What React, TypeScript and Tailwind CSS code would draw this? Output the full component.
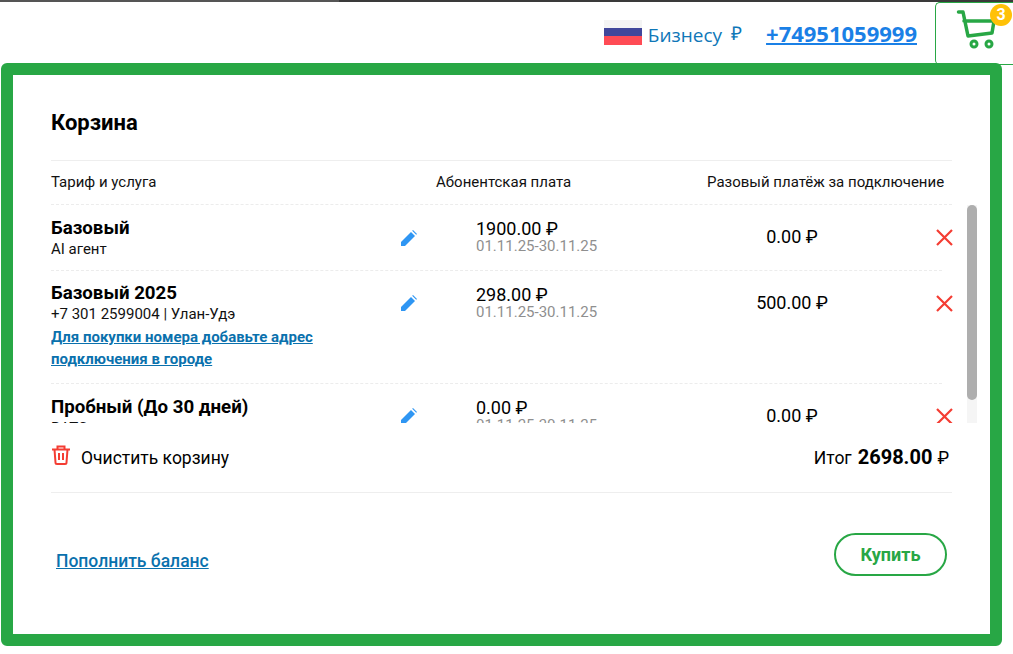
const roboto = "font-['Roboto',sans-serif]";

type Row = {
  name: string;
  sub: React.ReactNode;
  price: string;
  once: string;
  link?: boolean;
  height: string;
  first?: boolean;
  last?: boolean;
};

const rows: Row[] = [
  { name: "Базовый", sub: "AI агент", price: "1900.00", once: "0.00", height: "h-[66px]", first: true },
  {
    name: "Базовый 2025",
    sub: "+7 301 2599004 | Улан-Удэ",
    price: "298.00",
    once: "500.00",
    link: true,
    height: "h-[113px]",
  },
  { name: "Пробный (До 30 дней)", sub: "ВАТС", price: "0.00", once: "0.00", height: "h-[65px]", last: true },
];

function PencilIcon() {
  return (
    <svg width="16" height="16" viewBox="0 0 24 24" fill="#2f96f3">
      <path d="M0 24v-6L15 3l6 6L6 24z" />
      <path d="M16.8 1.2 18 0l6 6-1.2 1.2z" />
    </svg>
  );
}

function CrossIcon() {
  return (
    <svg width="17" height="17" viewBox="0 0 17 17" stroke="#f43d33" strokeWidth="2.2" fill="none">
      <path d="M1 1l15 15M16 1 1 16" />
    </svg>
  );
}

function CartRow({ row }: { row: Row }) {
  return (
    <div className={`flex ${row.height} shrink-0 ${row.last ? "" : "border-b border-dashed border-[#ececec]"}`}>
      <div className={`w-[340px] shrink-0 ${row.first ? "pt-[12px]" : row.last ? "pt-[12px]" : "pt-[11px]"}`}>
        <div className="text-[18.7px] leading-[22px] font-bold text-black">{row.name}</div>
        <div className="text-[15px] leading-[20px] text-[#111]">{row.sub}</div>
        {row.link && (
          <div className="mt-[2px] text-[15px] leading-[22px] font-bold text-[#0a71ad] underline">
            Для покупки номера добавьте адрес
            <br />
            подключения в городе
          </div>
        )}
      </div>
      <div className={`w-[85px] shrink-0 pl-[10px] ${row.first ? "pt-[25px]" : "pt-[24px]"}`}>
        <PencilIcon />
      </div>
      <div className="w-[221px] shrink-0 pt-[14px]">
        <div className="text-[18px] leading-[19px] text-black">{row.price} ₽</div>
        <div className="text-[15px] leading-[16px] text-[#8f8f8f]">01.11.25-30.11.25</div>
      </div>
      <div className="w-[190px] shrink-0 pt-[21px] text-center text-[18px] leading-[21px] text-black">
        {row.once} ₽
      </div>
      <div className="-mr-[11px] w-[66px] shrink-0 pt-[24px] pl-[49px]">
        <CrossIcon />
      </div>
    </div>
  );
}

export default function App() {
  return (
    <div className={`h-[654px] w-[1013px] overflow-hidden bg-white ${roboto}`}>
      <div className="flex h-[2px] bg-[#3a3a3a]">
        <div className="w-[339px] bg-[#555555]" />
      </div>
      <header className="relative flex h-[61px] items-center justify-end pr-[96px]">
        <div className="flex h-[25px] w-[38px] flex-col">
          <div className="h-[8px] bg-[#f4f4f4]" />
          <div className="h-[8px] bg-[#41479b]" />
          <div className="h-[9px] bg-[#ff4b55]" />
        </div>
        <span className="mt-[6px] ml-[6px] font-['Open_Sans',sans-serif] text-[19px] text-[#0f77b8]">Бизнесу</span>
        <span className="mt-[2px] ml-[9px] font-['Open_Sans',sans-serif] text-[19px] text-[#0f77b8]">₽</span>
        <a className="ml-[24px] font-['Open_Sans',sans-serif] text-[22px] leading-[28px] font-bold text-[#1a80e6] underline decoration-2">
          +74951059999
        </a>
        <div className="absolute top-0 right-0 z-10 h-[63px] w-[78px] rounded-l-[5px] border border-r-0 border-[#28a745] bg-white">
          <svg className="absolute top-[6px] left-[20px]" width="42" height="42" viewBox="0 0 42 42" fill="none">
            <path
              d="M2.500 3H7l5 24 24-3 2-12H8"
              stroke="#28a745"
              strokeWidth="3.500"
              strokeLinecap="round"
              strokeLinejoin="round"
            />
            <circle cx="18" cy="35" r="3" stroke="#28a745" strokeWidth="3" />
            <circle cx="33" cy="35" r="3" stroke="#28a745" strokeWidth="3" />
          </svg>
          <div className="absolute top-[1px] right-[1px] flex h-[22px] w-[22px] items-center justify-center rounded-full bg-[#ffc107] text-[16px] font-bold text-white">
            3
          </div>
        </div>
      </header>
      <main className="relative z-20 ml-[1px] h-[583px] w-[1001px] rounded-[6px] border-[12px] border-[#28a745] bg-white pt-[24px] pl-[38px]">
        <h1 className="h-[61px] text-[22px] leading-[48px] font-bold text-black">Корзина</h1>
        <div className="flex h-[44px] w-[901px] border-t border-[#eeeeee] text-[15px] leading-[42px] text-[#111]">
          <div className="w-[385px]">Тариф и услуга</div>
          <div className="w-[271px]">Абонентская плата</div>
          <div>Разовый платёж за подключение</div>
        </div>
        <div className="w-[901px] border-t border-dashed border-[#ececec]" />
        <div className="flex h-[218px] w-[926px] overflow-hidden">
          <div className="flex w-[891px] shrink-0 flex-col">
            {rows.map((row) => (
              <CartRow key={row.name} row={row} />
            ))}
          </div>
          <div className="ml-[25px] h-full w-[10px] shrink-0 bg-[#f5f5f5]">
            <div className="h-[195px] rounded-[5px] bg-[#aeaeae]" />
          </div>
        </div>
        <div className="flex h-[70px] w-[901px] items-center justify-between border-b border-[#eeeeee] pb-[1px]">
          <div className="flex items-center">
            <svg className="-mt-[4px]" width="20" height="20" viewBox="0 0 20 20" fill="none" stroke="#f43d33" strokeWidth="2">
              <path d="M1 4.500h18M6.500 4.500V1.500h7v3M3.500 4.500l1 13q0 1.500 1.500 1.500h8q1.500 0 1.500-1.500l1-13M8 8v7M12 8v7" />
            </svg>
            <span className="mt-[2px] ml-[10px] text-[17.500px] text-black">Очистить корзину</span>
          </div>
          <div className="mr-[3px] flex items-baseline text-[17.500px] text-black">
            <span>Итог</span>
            <span className="ml-[6px] text-[20px] font-bold">2698.00</span>
            <span className="ml-[5px]">₽</span>
          </div>
        </div>
        <div className="flex w-[901px] items-center justify-between pt-[40px] pr-[5px] pl-[5px]">
          <a className="mt-[14px] text-[17.500px] font-medium text-[#0a71ad] underline">Пополнить баланс</a>
          <button className="h-[43px] w-[113px] rounded-full border-2 border-[#28a745] text-[18px] font-bold text-[#28a745]">
            Купить
          </button>
        </div>
      </main>
    </div>
  );
}
